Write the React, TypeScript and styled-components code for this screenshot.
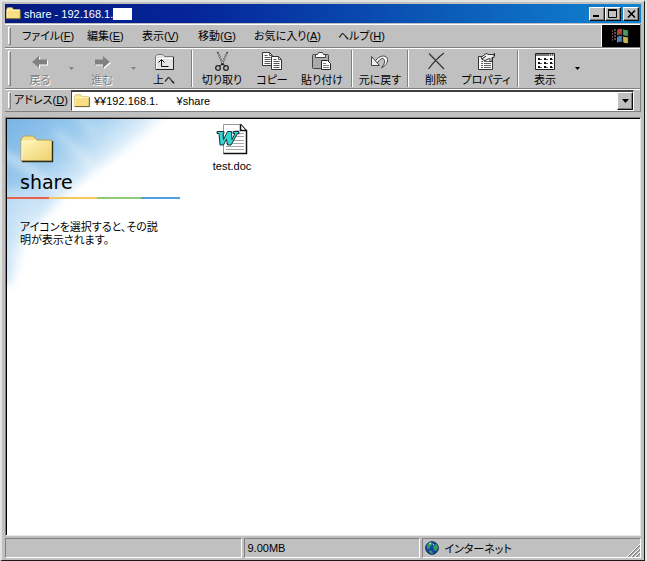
import React from "react";
import styled, { createGlobalStyle, css } from "styled-components";

const Global = createGlobalStyle`
  * { box-sizing: border-box; }
  body { margin: 0; background: #e4e8e0; }
  svg { display: block; flex: none; }
  button, input { font: inherit; color: inherit; letter-spacing: inherit; }
`;

const raised = css`
  border: 1px solid;
  border-color: #fff #111 #111 #fff;
  box-shadow: inset -1px -1px 0 #808080;
`;

const Window = styled.div`
  min-height: 100vh;
  display: flex;
  flex-direction: column;
  background: #c0c0c0;
  border: 2px solid;
  border-color: #e2e4e0 #1a1a1a #1a1a1a #e2e4e0;
  border-bottom-width: 1px;
  border-right-width: 1px;
  margin-right: 2px;
  padding: 2px 3px 2px 3px;
  font-family: "Liberation Sans", "Noto Sans CJK JP", sans-serif;
  font-size: 11px;
  font-feature-settings: "palt";
  color: #000;
`;

const TitleBar = styled.header`
  height: 19px;
  display: flex;
  align-items: center;
  gap: 3px;
  padding: 0 2px 0 1px;
  background: linear-gradient(90deg, #041a80 0%, #05259a 30%, #0b55b5 65%, #1084d0 100%);
  color: #fff;
`;

const Title = styled.h1`
  margin: 0;
  flex: 1;
  display: flex;
  align-items: center;
  font-size: 11px;
  font-weight: 400;
`;

const Redacted = styled.span`
  width: 19px;
  height: 12px;
  background: #fff;
`;

const Caption = styled.div`
  display: flex;
`;

const CaptionButton = styled.button<{ $apart?: boolean }>`
  ${raised}
  width: 16px;
  height: 14px;
  padding: 0;
  margin-left: ${(p) => (p.$apart ? 2 : 0)}px;
  background: #c0c0c0;
  display: grid;
  place-items: center;
`;

const Rebar = styled.div`
  margin-top: 1px;
  border-right: 1px solid #808080;
`;

const Band = styled.div<{ $height: number }>`
  display: flex;
  align-items: stretch;
  height: ${(p) => p.$height}px;
  border-top: 1px solid #fff;
  border-bottom: 1px solid #808080;
`;

const Gripper = styled.div`
  width: 3px;
  margin: 2px 0 2px 3px;
  border: 1px solid;
  border-color: #fff #808080 #808080 #fff;
`;

const Menu = styled.nav`
  flex: 1;
  display: grid;
  grid-template-columns: 65px 55px 56px 56px 84px 60px;
  padding-left: 11px;
`;

const MenuItem = styled.button`
  border: 0;
  padding: 0 0 2px;
  background: none;
  text-align: left;
  white-space: nowrap;
`;

const Brand = styled.div`
  width: 39px;
  border-left: 1px solid #fff;
  background: #000;
  display: grid;
  place-items: center;
`;

const Tools = styled.div`
  display: flex;
  align-items: stretch;
  padding-left: 6px;
`;

const ToolButton = styled.button<{ $width: number }>`
  width: ${(p) => p.$width}px;
  border: 0;
  padding: 2px 0 0;
  background: none;
  display: flex;
  flex-direction: column;
  align-items: center;
  white-space: nowrap;
  line-height: 14px;
  &:disabled {
    color: #808080;
    text-shadow: 1px 1px 0 #fff;
  }
`;

const DropButton = styled.button<{ $width: number }>`
  width: ${(p) => p.$width}px;
  border: 0;
  padding: 0;
  background: none;
  display: grid;
  place-items: center;
`;

const Separator = styled.div`
  width: 2px;
  margin: 1px 4px;
  border-left: 1px solid #808080;
  border-right: 1px solid #fff;
`;

const AddressLabel = styled.label`
  padding-left: 3px;
  width: 60px;
  line-height: 20px;
  white-space: nowrap;
`;

const AddressBox = styled.div`
  flex: 1;
  display: flex;
  align-items: center;
  margin-right: 6px;
  padding-left: 2px;
  background: #fff;
  border: 1px solid;
  border-color: #404040 #fff #fff #404040;
  border-top-width: 2px;
`;

const AddressInput = styled.input`
  flex: 1;
  min-width: 0;
  border: 0;
  padding: 0;
  margin-left: 4px;
  background: none;
  outline: none;
  white-space: pre;
`;

const ComboButton = styled.button`
  ${raised}
  width: 16px;
  align-self: stretch;
  padding: 0;
  background: #c0c0c0;
  display: grid;
  place-items: center;
`;

const View = styled.main`
  flex: 1;
  display: flex;
  margin-top: 5px;
  background: #fff;
  border: 1px solid;
  border-color: #808080 #e8e8e8 #e8e8e8 #808080;
  box-shadow: inset 1px 1px 0 #000;
`;

const WebPanel = styled.aside`
  position: relative;
  width: 190px;
  padding: 15px 0 0 13px;
  margin: 1px 0 0 1px;
`;

const SkyArt = styled.svg`
  position: absolute;
  left: 0;
  top: 0;
`;

const PanelBody = styled.div`
  position: relative;
`;

const FolderTitle = styled.h2`
  margin: 5px 0 0;
  font: 400 19px/27px "DejaVu Sans", sans-serif;
`;

const Rainbow = styled.div`
  display: grid;
  grid-template-columns: 42px 48px 44px 39px;
  height: 2px;
  margin: 1px 0 22px -13px;
`;

const Stripe = styled.span<{ $color: string }>`
  background: ${(p) => p.$color};
`;

const Hint = styled.p`
  margin: 0;
  width: 144px;
  line-height: 13px;
`;

const Files = styled.section`
  flex: 1;
  padding: 5px 0 0 7px;
`;

const FileItem = styled.button`
  width: 56px;
  border: 0;
  padding: 0;
  background: none;
  display: flex;
  flex-direction: column;
  align-items: center;
  gap: 4px;
  line-height: 14px;
`;

const StatusBar = styled.footer`
  display: grid;
  grid-template-columns: 239fr 177fr 220fr;
  gap: 2px;
  height: 20px;
  margin-top: 2px;
`;

const StatusCell = styled.div`
  display: flex;
  align-items: center;
  gap: 5px;
  padding-left: 2px;
  border: 1px solid;
  border-color: #808080 #fff #fff #808080;
`;

const SizeGrip = styled.svg`
  margin-left: auto;
  align-self: flex-end;
`;

const Folder = ({ size }: { size: number }) => (
  <svg width={size} height={size} viewBox="0 0 16 16" aria-hidden="true">
    <path d="M.5 13.5v-10l1.200-1.800h4.800l1.500 2h6.500l1 1v8.800z" fill="#ffe98c" stroke="#b8a050" strokeWidth=".6" />
    <path d="M1 4.300h14v8.800H1z" fill="#f8df84" />
    <path d="M1.200 12.800V4.400h13.400" fill="none" stroke="#fffbd0" strokeWidth=".8" />
    <path d="M15.300 4.500v9.100H.8" fill="none" stroke="#39351b" strokeWidth=".7" />
  </svg>
);

const BigFolder = () => (
  <svg width="34" height="30" viewBox="0 0 34 30" aria-hidden="true">
    <defs>
      <linearGradient id="fold" x1="0" y1="0" x2="1" y2="1">
        <stop offset="0" stopColor="#fff6b8" />
        <stop offset="1" stopColor="#eed070" />
      </linearGradient>
    </defs>
    <path d="M1 27V5l3-3h9l4 4h14l1 1v20z" fill="#f6df85" stroke="#b4a25a" />
    <path d="M2 7h30v19H2z" fill="url(#fold)" />
    <path d="M2 26V7h12l2-1" fill="none" stroke="#fffce0" />
    <path d="M32.500 7v20.500H2" fill="none" stroke="#302c18" strokeWidth="1.400" />
  </svg>
);

const ArrowIcon = ({ flip }: { flip?: boolean }) => (
  <svg width="22" height="22" viewBox="0 0 22 22" aria-hidden="true">
    <g transform={flip ? "matrix(-1 0 0 1 22 0)" : undefined}>
      <path d="M3 11l7-6v3.500h8v5h-8V17z" fill="#fff" transform={flip ? "translate(-1 1)" : "translate(1 1)"} />
      <path d="M3 11l7-6v3.500h8v5h-8V17z" fill="#808080" />
    </g>
  </svg>
);

const Sheet = ({ x, y }: { x: number; y: number }) => (
  <g transform={`translate(${x} ${y})`}>
    <path d="M.5.5h7l3 3v10H.5z" fill="#fff" stroke="#333" />
    <path d="M7.500.5v3h3M2.500 3.500h3M2.500 5.500h6M2.500 7.500h6M2.500 9.500h6M2.500 11.500h6" fill="none" stroke="#555" />
  </g>
);

const icons: Record<string, React.ReactNode> = {
  up: (
    <>
      <path d="M2.500 18.500v-13l2-2h5l2 2h9v13z" fill="#e4e4e4" stroke="#777" />
      <path d="M3.500 17.500v-10h16" fill="none" stroke="#fff" />
      <path d="M3 18.500h17.500V6" fill="none" stroke="#222" />
      <path d="M8.500 9v6.500h7M5.500 11.500l3-3 3 3" fill="none" stroke="#111" />
    </>
  ),
  cut: (
    <>
      <path d="M6.500 1l6 13M16.500 1l-6 13" stroke="#333" strokeWidth="1.700" />
      <path d="M6.800 2l5 10M16.200 2l-5 10" stroke="#eee" strokeWidth=".7" />
      <circle cx="7" cy="17" r="2.300" fill="none" stroke="#222" strokeWidth="1.300" />
      <circle cx="15" cy="17" r="2.300" fill="none" stroke="#222" strokeWidth="1.300" />
      <path d="M8.500 15l3-2 3 2" fill="none" stroke="#222" />
    </>
  ),
  copy: (
    <>
      <Sheet x={1} y={1} />
      <Sheet x={10} y={5} />
    </>
  ),
  paste: (
    <>
      <rect x="1.500" y="3.500" width="16" height="14" rx="1" fill="#aaa" stroke="#444" />
      <path d="M4.500 6.500v-3h2l1-2h4l1 2h2v3z" fill="#fff" stroke="#444" />
      <path d="M10.500 9.500h6l3 3v6h-9z" fill="#fff" stroke="#222" />
      <path d="M12 12.500h3M12 14.500h6M12 16.500h6" stroke="#777" />
    </>
  ),
  undo: (
    <>
      <path d="M5.500 11.500C9 4 18 3 18.500 8.500c.3 4-3 6.500-6 8.500 2-3 3.500-5 3-7.500-.7-3.500-5-2-7 2.500z" fill="#f4f4f4" stroke="#444" />
      <path d="M2.500 5.500v9h8z" fill="#f4f4f4" stroke="#444" />
    </>
  ),
  remove: (
    <>
      <path d="M4 2.500l15 15.500M19 2C12 7 8 12 3.500 18" fill="none" stroke="#333" strokeWidth="1.200" />
      <path d="M5 2.500l14 14.500" stroke="#888" strokeWidth=".5" />
    </>
  ),
  props: (
    <>
      <path d="M3.500 5.500h14v13h-14z" fill="#fff" stroke="#333" />
      <path d="M6 10.500h2M9 10.500h7M6 12.500h2M9 12.500h7M6 14.500h2M9 14.500h7M6 16.500h2M9 16.500h7" stroke="#666" />
      <path d="M6 6.500l5-4 3 1h5v3h-2v4h-2v-3l-3 1-2 1-3-1z" fill="#eee" stroke="#333" />
      <path d="M7 8l4-3M19.500 2v3" stroke="#222" />
    </>
  ),
  view: (
    <>
      <path d="M1.500 2.500h19v16h-19z" fill="#fff" stroke="#222" />
      <path d="M2 4h18" stroke="#777" strokeWidth="2" />
      <path d="M15 4h1M17 4h1M19 4h1" stroke="#fff" />
      <path d="M4 8h2M10 8h2M16 8h2M4 12h2M10 12h2M16 12h2M4 16h2M10 16h2M16 16h2" stroke="#111" strokeWidth="2" />
      <path d="M6 8.500h2M12 8.500h2M18 8.500h1M6 12.500h2M12 12.500h2M18 12.500h1M6 16.500h2M12 16.500h2M18 16.500h1" stroke="#555" />
    </>
  ),
};

const ToolIcon = ({ name }: { name: string }) => (
  <svg width="22" height="22" viewBox="0 0 22 22" aria-hidden="true">
    {icons[name]}
  </svg>
);

const Triangle = ({ wide, dim }: { wide?: boolean; dim?: boolean }) => (
  <svg width={wide ? 7 : 5} height={wide ? 4 : 3} viewBox={wide ? "0 0 7 4" : "0 0 5 3"} aria-hidden="true">
    <path d={wide ? "M0 0h7L3.500 4z" : "M0 0h5L2.500 3z"} fill={dim ? "#808080" : "#000"} />
  </svg>
);

const WindowsFlag = () => (
  <svg width="20" height="18" viewBox="0 0 20 18" aria-hidden="true">
    <path d="M1 4h1M1 7h1M1 10h1M1 13h1M3 3h2M3 6h2M3 9h2M3 12h2" stroke="#8a5a68" strokeWidth="1.400" />
    <path d="M6 3q3-2 5-1v6q-2-1-5 1z" fill="#b04832" />
    <path d="M12 2q3 2 5 1v6q-2 1-5-1z" fill="#4f9b62" />
    <path d="M6 10q3-2 5-1v6q-2-1-5 1z" fill="#4c82bd" />
    <path d="M12 9q3 2 5 1v6q-2 1-5-1z" fill="#c9b54b" />
    <path d="M11.500 1.500v14M6 9q3-1.500 5.500-.5t5.500 1M17.500 3v13" fill="none" stroke="#111" strokeWidth="1.300" />
  </svg>
);

const Sky = () => (
  <SkyArt width="190" height="180" viewBox="0 0 190 180" aria-hidden="true">
    <defs>
      <linearGradient id="skyTop" x1="0" y1="0" x2="86" y2="92" gradientUnits="userSpaceOnUse">
        <stop offset="0" stopColor="#79b4e4" />
        <stop offset=".45" stopColor="#9bcaed" />
        <stop offset=".8" stopColor="#e2f1fb" />
        <stop offset="1" stopColor="#fff" />
      </linearGradient>
      <linearGradient id="skySide" x1="0" y1="0" x2="1" y2="0">
        <stop offset="0" stopColor="#b2d7f3" />
        <stop offset="1" stopColor="#fff" stopOpacity="0" />
      </linearGradient>
      <filter id="soft" x="-30%" y="-30%" width="160%" height="160%">
        <feGaussianBlur stdDeviation="5" />
      </filter>
    </defs>
    <path d="M-15-15h182L140 12 112 34 84 54 55 77 22 116-15 140z" fill="url(#skyTop)" filter="url(#soft)" />
    <path d="M-10 70h48L25 110 12 140 4 165h-14z" fill="url(#skySide)" filter="url(#soft)" />
    <g filter="url(#soft)" fill="none" stroke="#fff" strokeLinecap="round">
      <path d="M-3 36L20 48 48 70" strokeWidth="8" opacity=".5" />
      <path d="M50 14l22 20 16 18" strokeWidth="5" opacity=".5" />
      <path d="M72-3l16 17" strokeWidth="5" opacity=".4" />
    </g>
  </SkyArt>
);

const WordDocument = () => (
  <svg width="32" height="32" viewBox="0 0 32 32" aria-hidden="true">
    <path d="M7.500 1.500h18l5 6v23h-23z" fill="#fff" stroke="#999" />
    <path d="M24.500 1.500v6h6v23h-23" fill="none" stroke="#111" strokeWidth="1.500" />
    <path d="M24.500 1l6 6.500" stroke="#111" />
    <path d="M19 10.500h9M19 13.500h9M12 17.500h16M10 20.500h18M10 23.500h18M10 26.500h18" stroke="#a6a6a6" />
    <path d="M19 7h4v5h-4z" fill="#ddb8c8" />
    <path d="M1 8.500h7v2H7l.5 6 4-8h4l.5 8 3-6h-2v-2h6v2h-1.500L15 22h-3.500l-1-6-3 6H4L3 10.500H1z" fill="#38d4d0" stroke="#08232b" strokeWidth=".9" />
  </svg>
);

const Globe = () => (
  <svg width="14" height="14" viewBox="0 0 14 14" aria-hidden="true">
    <circle cx="7" cy="7" r="6.300" fill="#1545a4" stroke="#10204c" />
    <path d="M2 4l3-3 3 1-1 2-2 1v2L2 8zM8 5l4-2 1 4-2 3-2-1zM4 9l3 1 1 3-3-1z" fill="#31a15b" />
    <path d="M4 3l2-1M8 4l1-1" stroke="#b6eef8" />
  </svg>
);

const menus = [
  ["ファイル", "F"],
  ["編集", "E"],
  ["表示", "V"],
  ["移動", "G"],
  ["お気に入り", "A"],
  ["ヘルプ", "H"],
];

const stripes = ["#e8604c", "#f4c860", "#90cc78", "#50a0e0"];

export default function App() {
  return (
    <>
      <Global />
      <Window>
        <TitleBar>
          <Folder size={15} />
          <Title>share - 192.168.1.<Redacted /></Title>
          <Caption>
            <CaptionButton aria-label="最小化">
              <svg width="10" height="9"><path d="M1 7h6" stroke="#000" strokeWidth="2" /></svg>
            </CaptionButton>
            <CaptionButton aria-label="最大化">
              <svg width="10" height="9"><path d="M.5 1v7.500h8V1" fill="none" stroke="#000" /><path d="M0 1h9" stroke="#000" strokeWidth="2" /></svg>
            </CaptionButton>
            <CaptionButton aria-label="閉じる" $apart>
              <svg width="9" height="8"><path d="M1 .5l7 7M8 .5l-7 7" stroke="#000" strokeWidth="1.600" /></svg>
            </CaptionButton>
          </Caption>
        </TitleBar>

        <Rebar>
          <Band $height={24}>
            <Gripper />
            <Menu>
              {menus.map(([label, key]) => (
                <MenuItem key={key}>{label}(<u>{key}</u>)</MenuItem>
              ))}
            </Menu>
            <Brand><WindowsFlag /></Brand>
          </Band>

          <Band $height={41}>
            <Gripper />
            <Tools>
              <ToolButton $width={46} disabled><ArrowIcon />戻る</ToolButton>
              <DropButton $width={16} aria-label="戻る履歴" disabled><Triangle dim /></DropButton>
              <ToolButton $width={46} disabled><ArrowIcon flip />進む</ToolButton>
              <DropButton $width={16} aria-label="進む履歴" disabled><Triangle dim /></DropButton>
              <ToolButton $width={46}><ToolIcon name="up" />上へ</ToolButton>
              <Separator />
              <ToolButton $width={50}><ToolIcon name="cut" />切り取り</ToolButton>
              <ToolButton $width={50}><ToolIcon name="copy" />コピー</ToolButton>
              <ToolButton $width={50}><ToolIcon name="paste" />貼り付け</ToolButton>
              <Separator />
              <ToolButton $width={46}><ToolIcon name="undo" />元に戻す</ToolButton>
              <Separator />
              <ToolButton $width={46}><ToolIcon name="remove" />削除</ToolButton>
              <ToolButton $width={54}><ToolIcon name="props" />プロパティ</ToolButton>
              <Separator />
              <ToolButton $width={44}><ToolIcon name="view" />表示</ToolButton>
              <DropButton $width={20} aria-label="表示方法"><Triangle /></DropButton>
            </Tools>
          </Band>

          <Band $height={23}>
            <Gripper />
            <AddressLabel htmlFor="address">アドレス(<u>D</u>)</AddressLabel>
            <AddressBox>
              <Folder size={16} />
              <AddressInput id="address" defaultValue="¥¥192.168.1.      ¥share" />
              <ComboButton aria-label="アドレス一覧"><Triangle wide /></ComboButton>
            </AddressBox>
          </Band>
        </Rebar>

        <View>
          <WebPanel>
            <Sky />
            <PanelBody>
              <BigFolder />
              <FolderTitle>share</FolderTitle>
              <Rainbow>
                {stripes.map((color) => <Stripe key={color} $color={color} />)}
              </Rainbow>
              <Hint>アイコンを選択すると、その説明が表示されます。</Hint>
            </PanelBody>
          </WebPanel>
          <Files>
            <FileItem><WordDocument />test.doc</FileItem>
          </Files>
        </View>

        <StatusBar>
          <StatusCell />
          <StatusCell>9.00MB</StatusCell>
          <StatusCell>
            <Globe />インターネット
            <SizeGrip width="13" height="13" viewBox="0 0 13 13" aria-hidden="true">
              <path d="M1 13L13 1M5 13l8-8M9 13l4-4" stroke="#808080" strokeWidth="1.500" />
              <path d="M0 13L13 0M4 13l9-9M8 13l5-5" stroke="#fff" />
            </SizeGrip>
          </StatusCell>
        </StatusBar>
      </Window>
    </>
  );
}
